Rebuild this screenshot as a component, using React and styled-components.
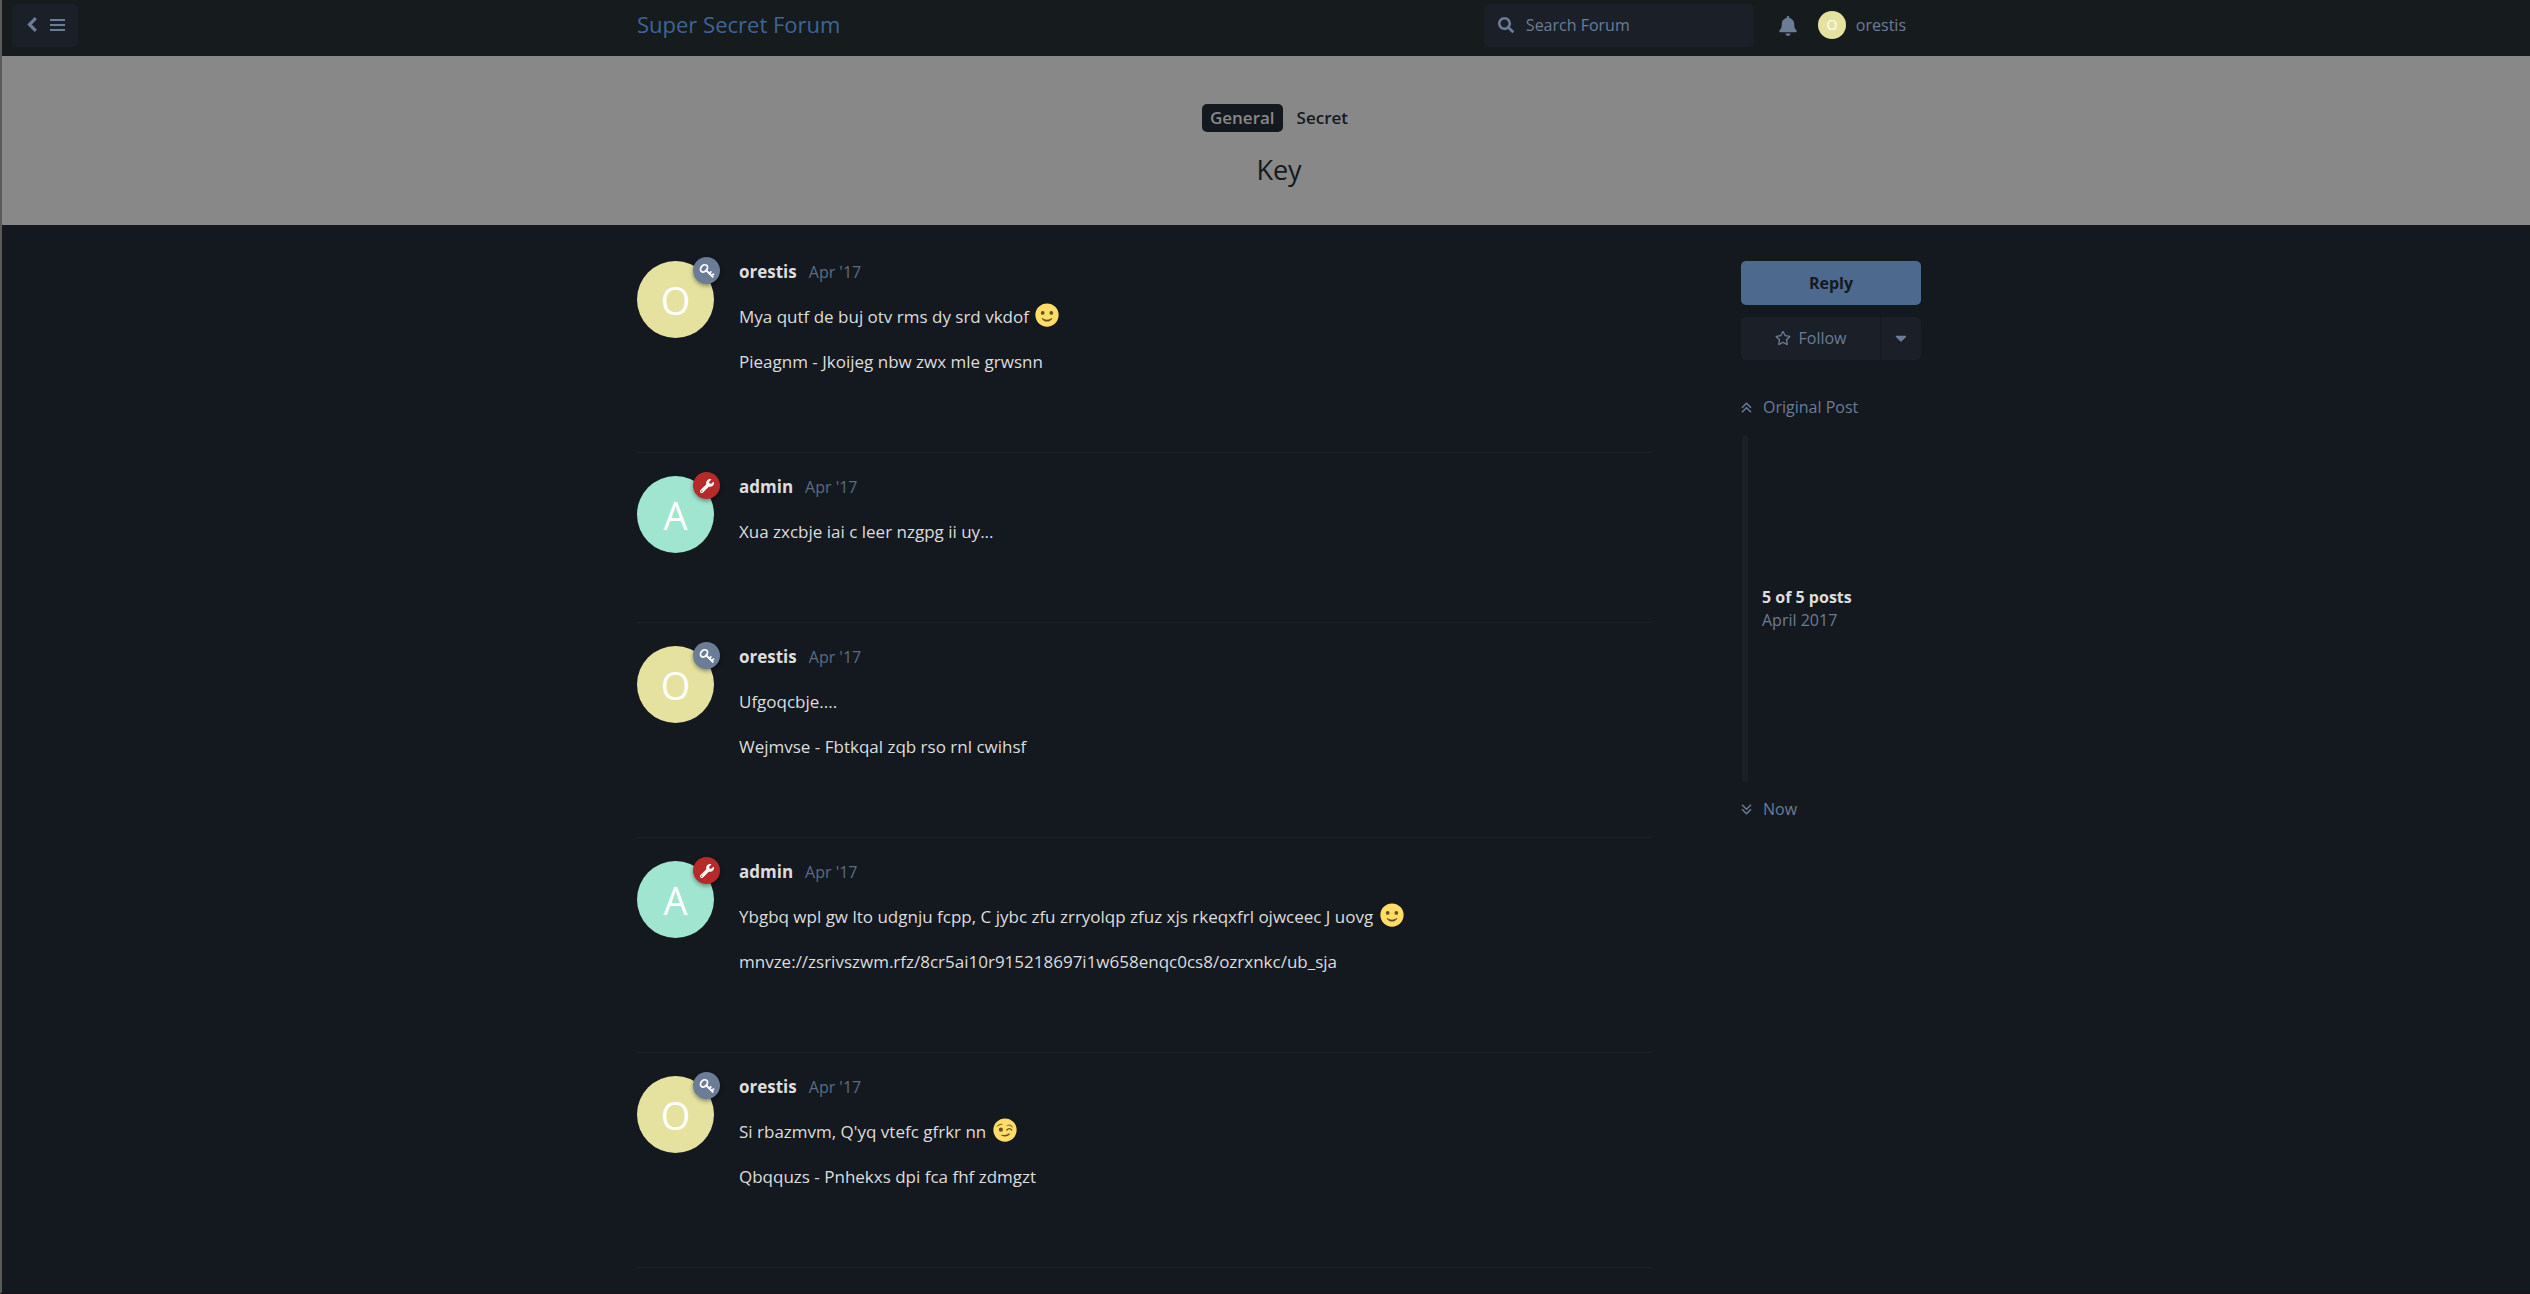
import React from 'react';
import styled, { createGlobalStyle } from 'styled-components';
import { FaSearch, FaBell, FaWrench, FaRegStar, FaCaretDown } from 'react-icons/fa';

const c = {
  body: '#14191f', header: '#161b1e', control: '#1b1f28', muted: '#6b7c97',
  hero: '#888888', text: '#dddddd', link: '#3f6496', primary: '#4d698e',
  yellow: '#e5e2a0', mint: '#a0e5d0',
};

const GlobalStyle = createGlobalStyle`
  * { box-sizing: border-box; }
  body {
    margin: 0;
    background: ${c.body};
    color: ${c.text};
    font: 16px/24px "Open Sans", "Noto Sans", sans-serif;
  }
  button, input { font: inherit; color: inherit; border: 0; padding: 0; background: none; }
  button { cursor: pointer; }
  a { color: inherit; text-decoration: none; }
  h1, h2, h3, p, ul { margin: 0; padding: 0; font-weight: 400; }
`;

const Page = styled.div`
  min-height: 100vh;
  border-left: 2px solid #5a5a5a;
  border-bottom: 2px solid #16131c;
`;

const Header = styled.header`
  display: flex;
  height: 56px;
  padding: 4px 0 9px 10px;
  background: ${c.header};
`;

const NavButton = styled.button`
  display: flex;
  align-items: center;
  justify-content: center;
  gap: 13px;
  width: 66px;
  height: 43px;
  margin-right: -76px;
  padding: 0 0 2px 2px;
  flex: none;
  border-radius: 5px;
  background: ${c.control};
  color: ${c.muted};
`;

const Shift = styled.div`
  flex: 1;
  padding-left: 26px;
`;

const Container = styled.div`
  display: flex;
  justify-content: space-between;
  max-width: 1284px;
  margin: 0 auto;
`;

const Brand = styled.a`
  margin-right: auto;
  color: ${c.link};
  font-size: 22px;
  line-height: 41px;
`;

const Search = styled.label`
  display: flex;
  align-items: center;
  gap: 12px;
  width: 270px;
  height: 43px;
  padding: 0 14px 2px;
  border-radius: 5px;
  background: ${c.control};
  color: ${c.muted};
  input { flex: 1; min-width: 0; outline: 0; }
  input::placeholder { color: inherit; opacity: 1; }
`;

const BellButton = styled.button`
  display: flex;
  align-items: center;
  justify-content: center;
  width: 20px;
  height: 43px;
  margin: 0 20px 0 24px;
  color: ${c.muted};
  font-size: 20px;
`;

const UserButton = styled.button`
  display: flex;
  align-items: center;
  gap: 10px;
  height: 43px;
  padding: 0 15px 2px 0;
  color: ${c.muted};
`;

const Avatar = styled.span`
  display: flex;
  align-items: center;
  justify-content: center;
  flex: none;
  width: ${(p) => p.$size}px;
  height: ${(p) => p.$size}px;
  border-radius: 50%;
  background: ${(p) => p.$color};
  color: #fff;
  font-size: ${(p) => (p.$size > 40 ? 38 : 14)}px;
  line-height: 1;
`;

const Hero = styled.section`
  height: 169px;
  padding: 48px 0 0 26px;
  background: ${c.hero};
  color: ${c.body};
  text-align: center;
`;

const Tags = styled.div`
  display: flex;
  justify-content: center;
  gap: 6px;
`;

const Tag = styled.a`
  padding: 0 8px;
  border-radius: 5px;
  font-size: 17px;
  font-weight: 600;
  line-height: 28px;
  background: ${(p) => (p.$filled ? c.body : 'transparent')};
  color: ${(p) => (p.$filled ? c.hero : c.body)};
`;

const Title = styled.h2`
  margin-top: 18px;
  font-size: 27px;
  line-height: 40px;
`;

const Stream = styled.div`
  flex: 1;
  max-width: 1015px;
`;

const Post = styled.article`
  display: flex;
  gap: 25px;
  padding: 36px 0 59px;
  border-bottom: 1px solid #1b2029;
  & + & { padding-top: 23px; }
`;

const Face = styled.div`
  position: relative;
  height: 28px;
`;

const Badge = styled.span`
  position: absolute;
  top: -4px;
  right: -6px;
  display: flex;
  align-items: center;
  justify-content: center;
  width: 27px;
  height: 27px;
  border-radius: 50%;
  background: ${(p) => (p.$admin ? '#b72a2a' : c.muted)};
  color: #fff;
  font-size: 14px;
  box-shadow: 0 2px 4px rgba(0, 0, 0, 0.4);
`;

const PostBody = styled.div`
  font-size: 17px;
  line-height: 28px;
`;

const PostHeader = styled.header`
  display: flex;
  gap: 12px;
  margin: -3px 0 17px;
`;

const Author = styled.h3`
  font-size: 17px;
  font-weight: 700;
`;

const PostDate = styled.a`
  color: #5d6b82;
  font-size: 16px;
`;

const Paragraph = styled.p`
  height: 28px;
  margin-bottom: 17px;
  svg { width: 24px; height: 24px; vertical-align: -4px; margin-left: 2px; }
`;

const Side = styled.aside`
  width: 180px;
  padding-top: 36px;
  color: ${c.muted};
`;

const ReplyButton = styled.button`
  width: 100%;
  height: 44px;
  border-radius: 5px;
  background: ${c.primary};
  color: ${c.body};
  font-weight: 700;
`;

const FollowGroup = styled.div`
  display: flex;
  gap: 1px;
  height: 43px;
  margin: 12px 0 33px;
`;

const FollowButton = styled.button`
  flex: 1;
  display: flex;
  align-items: center;
  justify-content: center;
  gap: 8px;
  padding-bottom: 1px;
  border-radius: 5px 0 0 5px;
  background: ${c.control};
`;

const FollowToggle = styled(FollowButton)`
  flex: 0 0 40px;
  border-radius: 0 5px 5px 0;
  font-size: 18px;
`;

const Jump = styled.a`
  display: flex;
  align-items: center;
  gap: 11px;
  line-height: 28px;
`;

const Scrubber = styled.div`
  display: flex;
  align-items: center;
  gap: 14px;
  height: 347px;
  margin: 14px 0 13px 1px;
  line-height: 23px;
`;

const Track = styled.span`
  align-self: stretch;
  width: 6px;
  border-radius: 3px;
  background: ${c.control};
`;

const Count = styled.strong`
  display: block;
  color: ${c.text};
`;

const BackIcon = () => (
  <svg width="10" height="15" viewBox="0 0 10 15" fill="none" stroke="currentColor" strokeWidth="3.2" aria-hidden="true">
    <path d="M8.8 1.2 2.5 7.5l6.3 6.3" />
  </svg>
);

const MenuIcon = () => (
  <svg width="15" height="12" viewBox="0 0 15 12" fill="currentColor" aria-hidden="true">
    <path d="M0 0h15v2H0zM0 5h15v2H0zM0 10h15v2H0z" />
  </svg>
);

const DoubleUpIcon = () => (
  <svg width="11" height="11" viewBox="0 0 11 11" fill="none" stroke="currentColor" strokeWidth="1.5" aria-hidden="true">
    <path d="M1 5.8 5.5 1.3 10 5.8M1 10.2l4.5-4.5 4.5 4.5" />
  </svg>
);

const DoubleDownIcon = () => (
  <svg width="11" height="11" viewBox="0 0 11 11" fill="none" stroke="currentColor" strokeWidth="1.5" aria-hidden="true">
    <path d="M1 .8l4.5 4.5L10 .8M1 5.2l4.5 4.5L10 5.2" />
  </svg>
);

const KeyIcon = () => (
  <svg width="16" height="16" viewBox="0 0 16 16" fill="none" stroke="#fff" aria-hidden="true">
    <ellipse cx="5" cy="5.4" rx="3" ry="4" strokeWidth="1.8" transform="rotate(42 5 5.4)" />
    <path d="M7.6 7.8 14.4 14.4" strokeWidth="2" />
    <path d="M10.2 10.6 12.4 8.4M12.6 13 15 10.6" strokeWidth="1.7" />
  </svg>
);

const Emoji = ({ wink }) => (
  <svg viewBox="0 0 64 64" role="img" aria-label={wink ? 'wink' : 'smile'}>
    <circle cx="32" cy="32" r="31" fill="#ffdd67" />
    {wink ? (
      <g>
        <circle cx="21" cy="31" r="5.5" fill="#664e27" />
        <g fill="none" stroke="#664e27" strokeWidth="3.5" strokeLinecap="round">
          <path d="M37 32q6-7 13 0" />
          <path d="M24 46q12 4 20-4 -6 9-20 4" />
          <path d="M38 20q8-3 14 4M11 22q5-6 13-5" stroke="#917524" strokeWidth="3" />
        </g>
      </g>
    ) : (
      <g fill="#664e27">
        <circle cx="20.5" cy="26.6" r="5" />
        <circle cx="43.5" cy="26.6" r="5" />
        <path d="M44.6 40.3c-8.1 5.7-17.1 5.6-25.2 0-1-.7-1.8.5-1.2 1.6 2.5 4 7.4 7.7 13.8 7.7s11.3-3.6 13.8-7.7c.6-1.1-.2-2.3-1.2-1.6" />
      </g>
    )}
  </svg>
);

const posts = [
  { author: 'orestis', lines: ['Mya qutf de buj otv rms dy srd vkdof', 'Pieagnm - Jkoijeg nbw zwx mle grwsnn'], emoji: 'smile' },
  { author: 'admin', lines: ['Xua zxcbje iai c leer nzgpg ii uy...'] },
  { author: 'orestis', lines: ['Ufgoqcbje....', 'Wejmvse - Fbtkqal zqb rso rnl cwihsf'] },
  { author: 'admin', lines: ['Ybgbq wpl gw lto udgnju fcpp, C jybc zfu zrryolqp zfuz xjs rkeqxfrl ojwceec J uovg', 'mnvze://zsrivszwm.rfz/8cr5ai10r915218697i1w658enqc0cs8/ozrxnkc/ub_sja'], emoji: 'smile' },
  { author: 'orestis', lines: ["Si rbazmvm, Q'yq vtefc gfrkr nn", 'Qbqquzs - Pnhekxs dpi fca fhf zdmgzt'], emoji: 'wink' },
];

const PostItem = ({ author, lines, emoji }) => {
  const admin = author === 'admin';
  return (
    <Post>
      <Face>
        <Avatar $size={77} $color={admin ? c.mint : c.yellow}>{author[0].toUpperCase()}</Avatar>
        <Badge $admin={admin}>{admin ? <FaWrench /> : <KeyIcon />}</Badge>
      </Face>
      <PostBody>
        <PostHeader>
          <Author><a href="#author">{author}</a></Author>
          <PostDate href="#date">Apr '17</PostDate>
        </PostHeader>
        {lines.map((line, i) => (
          <Paragraph key={line}>
            {line}
            {i === 0 && emoji && <> <Emoji wink={emoji === 'wink'} /></>}
          </Paragraph>
        ))}
      </PostBody>
    </Post>
  );
};

export default function App() {
  return (
    <>
      <GlobalStyle />
      <Page>
        <Header>
          <NavButton aria-label="Back to discussions"><BackIcon /><MenuIcon /></NavButton>
          <Shift>
            <Container>
              <Brand href="#home">Super Secret Forum</Brand>
              <Search>
                <FaSearch />
                <input type="search" placeholder="Search Forum" aria-label="Search Forum" />
              </Search>
              <BellButton aria-label="Notifications"><FaBell /></BellButton>
              <UserButton><Avatar $size={28} $color={c.yellow}>O</Avatar>orestis</UserButton>
            </Container>
          </Shift>
        </Header>
        <Hero>
          <Tags>
            <Tag href="#general" $filled>General</Tag>
            <Tag href="#secret">Secret</Tag>
          </Tags>
          <Title>Key</Title>
        </Hero>
        <Shift>
          <Container as="main">
            <Stream>{posts.map((post, i) => <PostItem key={i} {...post} />)}</Stream>
            <Side>
              <ReplyButton>Reply</ReplyButton>
              <FollowGroup>
                <FollowButton><FaRegStar />Follow</FollowButton>
                <FollowToggle aria-label="Follow options"><FaCaretDown /></FollowToggle>
              </FollowGroup>
              <Jump href="#first"><DoubleUpIcon />Original Post</Jump>
              <Scrubber>
                <Track />
                <div><Count>5 of 5 posts</Count>April 2017</div>
              </Scrubber>
              <Jump href="#now"><DoubleDownIcon />Now</Jump>
            </Side>
          </Container>
        </Shift>
      </Page>
    </>
  );
}
